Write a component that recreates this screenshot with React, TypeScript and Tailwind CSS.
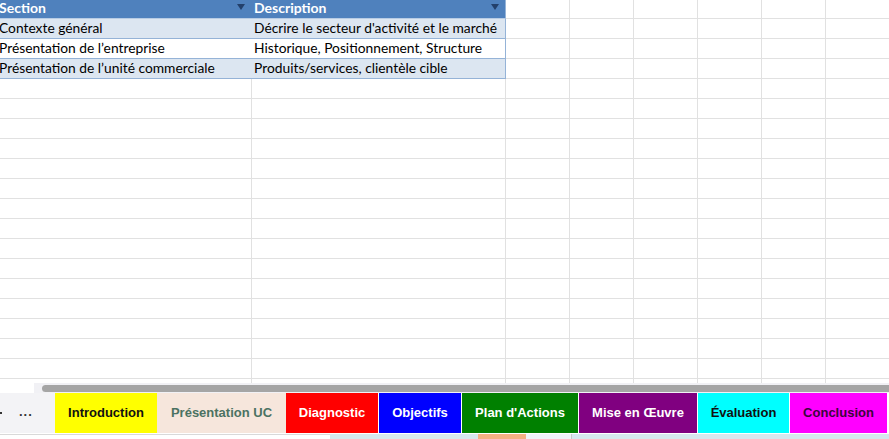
import React from "react";

const tableRows = [
  ["Contexte général", "Décrire le secteur d'activité et le marché"],
  ["Présentation de l’entreprise", "Historique, Positionnement, Structure"],
  ["Présentation de l’unité commerciale", "Produits/services, clientèle cible"],
];

const tabs = [
  { label: "Introduction", cls: "w-[102px] bg-[#ffff00] text-[#111111]" },
  { label: "Présentation UC", cls: "w-[129px] bg-[#f6e6dc] text-[#4b7262]" },
  { label: "Diagnostic", cls: "w-[92px] bg-[#ff0000] text-white" },
  { label: "Objectifs", cls: "ml-[1px] w-[82px] bg-[#0000ff] text-white" },
  { label: "Plan d'Actions", cls: "ml-[1px] w-[116px] bg-[#008000] text-white" },
  { label: "Mise en Œuvre", cls: "ml-[1px] w-[118px] bg-[#800080] text-white" },
  { label: "Évaluation", cls: "ml-[1px] w-[91px] bg-[#00ffff] text-[#111111]" },
  { label: "Conclusion", cls: "ml-[1px] w-[97px] bg-[#ff00ff] text-[#3a063a]" },
];

const Arrow = () => (
  <svg width="8" height="6" viewBox="0 0 8 6" className="shrink-0">
    <path d="M0 0 L8 0 L4 6 Z" fill="#23406b" />
  </svg>
);

function ExtraCols() {
  return (
    <>
      <div className="w-[64px] h-full shrink-0 border-r border-[#e1e1e1]" />
      <div className="w-[64px] h-full shrink-0 border-r border-[#e1e1e1]" />
      <div className="w-[64px] h-full shrink-0 border-r border-[#e1e1e1]" />
      <div className="w-[64px] h-full shrink-0 border-r border-[#e1e1e1]" />
      <div className="w-[64px] h-full shrink-0 border-r border-[#e1e1e1]" />
      <div className="w-[64px] h-full shrink-0 border-r border-[#e1e1e1]" />
    </>
  );
}

export default function App() {
  const emptyCount = 15;
  return (
    <div
      className="w-[889px] h-[439px] overflow-hidden bg-white flex flex-col"
      style={{ fontFamily: "Lato, 'Liberation Sans', sans-serif" }}
    >
      {/* Grid area */}
      <div className="h-[383px] overflow-hidden flex flex-col shrink-0">
        {/* header */}
        <div className="flex h-[19px] shrink-0">
          <div className="w-[252px] h-full shrink-0 bg-[#4f81bd] border-b border-[#b8cce4] flex items-start justify-between pr-[7px]">
            <span className="text-white font-bold text-[14px] leading-[15px] -ml-px">Section</span>
            <span className="mt-[4px]"><Arrow /></span>
          </div>
          <div className="w-[254px] h-full shrink-0 bg-[#4f81bd] border-b border-r border-b-[#b8cce4] border-r-[#95b3d7] flex items-start justify-between pl-[2px] pr-[6px]">
            <span className="text-white font-bold text-[14px] leading-[15px]">Description</span>
            <span className="mt-[4px]"><Arrow /></span>
          </div>
          <div className="flex h-full border-b border-[#e1e1e1]">
            <ExtraCols />
          </div>
        </div>
        {tableRows.map((r, i) => {
          const bg = i % 2 === 0 ? "bg-[#dce6f1]" : "bg-white";
          return (
            <div key={i} className="flex h-[20px] shrink-0">
              <div className={`w-[252px] h-full shrink-0 ${bg} border-b border-[#95b3d7] flex items-center`}>
                <span className="text-[13.8px] text-black whitespace-nowrap -ml-px">{r[0]}</span>
              </div>
              <div className={`w-[254px] h-full shrink-0 ${bg} border-b border-r border-[#95b3d7] flex items-center pl-[2px]`}>
                <span className="text-[13.8px] text-black whitespace-nowrap">{r[1]}</span>
              </div>
              <div className="flex h-full border-b border-[#e1e1e1]">
                <ExtraCols />
              </div>
            </div>
          );
        })}
        {Array.from({ length: emptyCount + 1 }).map((_, i) => (
          <div key={i} className="flex h-[20px] shrink-0 border-b border-[#e1e1e1]">
            <div className="w-[252px] h-full shrink-0 border-r border-[#e1e1e1]" />
            <div className="w-[254px] h-full shrink-0 border-r border-[#e1e1e1]" />
            <ExtraCols />
          </div>
        ))}
      </div>

      {/* horizontal scrollbar */}
      <div className="h-[10px] shrink-0 flex">
        <div className="w-[34px] h-full bg-white" />
        <div className="flex-1 h-full bg-[#f1f1f5] pl-[8px] pt-[2px] pb-[1px]">
          <div className="h-full bg-[#a5a5a5] rounded-l-full" />
        </div>
      </div>

      {/* sheet tabs */}
      <div
        className="h-[41px] shrink-0 flex bg-white"
        style={{ fontFamily: "'Liberation Sans', Arial, sans-serif" }}
      >
        <div className="w-[55px] h-[40px] shrink-0 bg-[#f3f3f6] flex items-center relative">
          <span className="absolute left-0 top-[19px] w-[2px] h-[2px] bg-[#333]" />
          <span className="ml-[19px] text-[13px] font-bold text-[#333] tracking-[1px] leading-none -mt-[4px]">...</span>
        </div>
        <div className="flex h-[40px]">
          {tabs.map((t) => (
            <div
              key={t.label}
              className={`${t.cls} h-full shrink-0 flex items-center justify-center text-[13px] font-bold whitespace-nowrap`}
            >
              {t.label}
            </div>
          ))}
        </div>
      </div>

      {/* bottom strip */}
      <div className="h-[5px] shrink-0 flex">
        <div className="w-[330px] h-full border-t border-[#d9d9d9] bg-white" />
        <div className="w-[148px] h-full bg-[#d6e7ee]" />
        <div className="w-[48px] h-full bg-[#f4b183]" />
        <div className="w-[46px] h-full bg-[#eef4f8] border-r border-[#c8c8c8]" />
        <div className="flex-1 h-full bg-[#d6e7ee]" />
      </div>
    </div>
  );
}
